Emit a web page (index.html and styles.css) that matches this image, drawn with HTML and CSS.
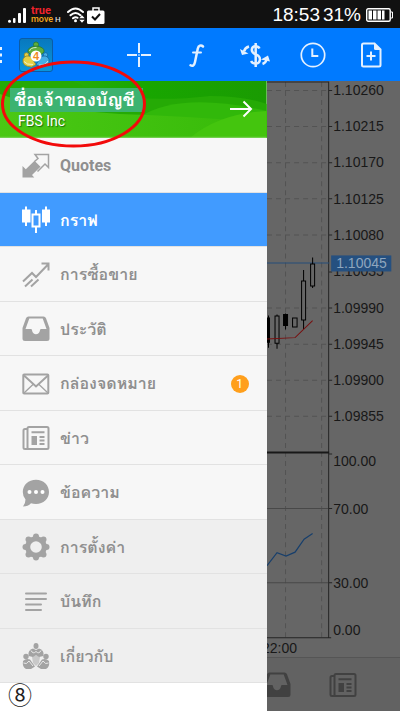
FILE: index.html
```html
<!DOCTYPE html>
<html lang="th">
<head>
<meta charset="utf-8">
<meta name="viewport" content="width=device-width, initial-scale=1">
<title>MetaTrader 4</title>
<link rel="stylesheet" href="styles.css">
</head>
<body>
<svg width="0" height="0" class="defs" aria-hidden="true">
  <defs>
    <symbol id="tray" viewBox="0 0 28 28"><path fill="currentColor" fill-rule="evenodd" d="M6.500 1.500h15q1.800 0 2.500 1.700L27.500 13v10.500q0 2.500-2.500 2.500H3Q.5 26 .5 23.500V13L4 3.200Q4.700 1.500 6.500 1.500zM7.300 3.500L3.500 14H9q.8 0 1 1.200c.7 5.400 7.300 5.400 8 0q.2-1.200 1-1.200h5.500L20.700 3.500z"/></symbol>
    <symbol id="news" viewBox="0 0 28 28"><g fill="none" stroke="currentColor" stroke-width="2"><rect x="5.500" y="3" width="21" height="22" rx="1.500"/><path d="M5.500 5h-2.500q-1.500 0-1.500 1.500v17q0 1.500 1.500 1.500h5M9.500 8.200h13M17.500 13h5M17.500 16.500h5M17.500 20h5"/></g><path fill="currentColor" d="M9.500 12h5.500v9H9.500z"/></symbol>
  </defs>
</svg>
<div class="app">
  <header class="status">
    <svg class="signal" viewBox="0 0 19 15" fill="#fff"><circle cx="1.500" cy="13.300" r="1.500"/><rect x="5" y="10" width="2.500" height="5" rx="1"/><rect x="10" y="5" width="3" height="10" rx="1"/><rect x="15" y="0" width="3" height="15" rx="1"/></svg>
    <div class="carrier"><b>true</b><span>move<i>H</i></span></div>
    <svg class="wifi" viewBox="0 0 18 16" fill="none" stroke="#fff" stroke-width="2" stroke-linecap="round"><path d="M1 5Q8.500-2 16 5M3.500 8.300q5-4.600 10 0M6 11.300q2.500-2 4.500-.5"/><circle cx="8.500" cy="13.800" r="1.500" fill="#fff" stroke="none"/><path d="M12.300 11.300l2.700-3 2.700 3zM12.300 12.700l2.700 3 2.700-3z" fill="#fff" stroke="none"/></svg>
    <svg class="bag" viewBox="0 0 18 17"><path d="M6 4V1h6v3" fill="none" stroke="#fff" stroke-width="1.500"/><rect x="0" y="3.500" width="17.500" height="13.500" rx="1.500" fill="#fff"/><path d="M5 9.500l3 3 5-5.500" fill="none" stroke="#111" stroke-width="2"/></svg>
    <div class="clock"><span>18:53</span><span>31%</span></div>
    <svg class="battery" viewBox="0 0 27 14"><rect x=".7" y=".7" width="23.500" height="12.600" rx="1.500" fill="none" stroke="#fff" stroke-width="1.400"/><path d="M25 4h1.500v6H25" fill="none" stroke="#fff"/><path d="M2.500 2.500h3.500v9H2.500zM7 2.500h3.500v9H7zM11.500 2.500H15v9h-3.500zM16 2.500h2.500v9H16z" fill="#fff"/></svg>
  </header>

  <nav class="toolbar">
    <button class="home" aria-label="Menu">
      <svg class="dots" viewBox="0 0 3 16" fill="#e8f3ff"><path d="M0 0h2v3H0zM0 6.500h2v3H0zM0 13h2v3H0z"/></svg>
      <svg class="logo" viewBox="0 0 34 34"><defs><linearGradient id="tile" x2="0" y2="1"><stop stop-color="#0878bd"/><stop offset="1" stop-color="#0a96dc"/></linearGradient></defs><rect x=".5" y=".5" width="33" height="33" rx="2.500" fill="url(#tile)" stroke="#0b5ca6"/>
        <g stroke-width=".8"><g fill="#5fae3c" stroke="#277830"><circle cx="17" cy="6.500" r="2.500"/><path d="M9 14q-1-5 8-6 9 1 8 6l-3.500 3-4.500-2-4.500 2z"/></g><g fill="#e5d044" stroke="#93862a"><circle cx="7.500" cy="17" r="2.300"/><path d="M4 21q2.500-4.500 7.500-2.500l5.500 8-4.500 2.500q-10-.5-8.500-8z"/></g><g fill="#45aee6" stroke="#17659e"><circle cx="26.500" cy="17" r="2.300"/><path d="M30 21q-2.500-4.500-7.500-2.500l-5.500 8 4.500 2.500q10-.5 8.500-8z"/></g><path d="M5 23.500q2.500 3.500 9 3M20 27q6 1 9-4M10.500 13q1-3.500 7-3.500" fill="none" stroke="#eaf7f4"/></g><circle cx="17" cy="18" r="5.500" fill="#fff"/><text x="17" y="22" text-anchor="middle" class="four">4</text></svg>
    </button>
    <button aria-label="Crosshair"><svg viewBox="0 0 26 26" fill="none" stroke="#e3f0ff" stroke-width="2"><path d="M13 1v10M13 15v10M1 13h10M15 13h10"/><path d="M12.300 13h1.400" stroke-width="1.400"/></svg></button>
    <button aria-label="Indicators"><svg viewBox="0 0 26 26" fill="none" stroke="#e3f0ff" stroke-width="2.500" stroke-linecap="round"><path d="M19 4.500c-2-2-4.500-1-5.200 2L11 20c-.7 3.500-2.500 4.500-4.500 3.300"/><path d="M9 10.500h8" stroke-width="2"/></svg></button>
    <button aria-label="Trade"><svg class="wide" viewBox="0 0 30 26" fill="none" stroke="#e3f0ff" stroke-width="2"><path d="M19.500 6.500q-1.200-2.200-4-2.200-3.500 0-3.700 3.500 0 3 3.900 4.600 4.500 1.800 4.200 5.200-.4 4-4.300 4-3.300 0-4.500-2.600" stroke-width="2.500"/><path d="M15.700 1v24" stroke-width="2.500"/><path d="M9 4.500Q5 5.500 4 9.500M22.500 22q4-1.500 4-5.500" stroke-width="2.500"/><path d="M0 7l2 6 6.500-1.500zM21 17.500l7-4 2 6z" fill="#e3f0ff" stroke="none"/></svg></button>
    <button aria-label="Periods"><svg viewBox="0 0 26 26" fill="none" stroke="#e3f0ff"><circle cx="13" cy="13" r="11.700" stroke-width="1.700"/><path d="M12.300 6.500V14h6" stroke-width="2"/></svg></button>
    <button aria-label="New order"><svg viewBox="0 0 26 26" fill="none" stroke="#e3f0ff" stroke-width="2"><path d="M5.500 1.500h11l6 6v15.500q0 1.500-1.500 1.500H5.500Q4 24.500 4 23V3q0-1.500 1.500-1.500zM13 9.500v9M8.500 14h9"/><path d="M16 1l7 7h-5.500Q16 8 16 6.500z" fill="#e3f0ff" stroke="none"/></svg></button>
  </nav>

  <main class="body">
    <aside class="drawer">
      <a class="account" href="#account">
        <svg class="waves" viewBox="0 0 267 57" preserveAspectRatio="none"><defs><linearGradient id="g1"><stop stop-color="#31b512"/><stop offset=".55" stop-color="#18a600"/><stop offset="1" stop-color="#1a9b02"/></linearGradient><linearGradient id="g2"><stop stop-color="#4bc814"/><stop offset="1" stop-color="#36ba09"/></linearGradient></defs><rect width="267" height="57" fill="url(#g1)"/><path d="M0 0h72Q120 25 210 15q35 0 57 8v34H0z" fill="#25aa05"/><path d="M140 36Q180 10 267 30v27H140z" fill="#31b80a"/><path d="M0 13q40 15 120 20 70 2 147 9v15H0z" fill="url(#g2)"/><path d="M190 57q30-25 77-27v27z" fill="#44c50e"/><path d="M0 56.300h267" stroke="#7ed35d"/></svg>
        <span class="who"><strong>ชื่อเจ้าของบัญชี</strong><span>FBS Inc</span></span>
        <svg class="arrow" viewBox="0 0 24 18" fill="none" stroke="#fff" stroke-width="2"><path d="M1 9h21M14.500 1.500L22 9l-7.500 7.500"/></svg>
      </a>
      <nav class="menu">
        <a href="#quotes"><svg viewBox="0 0 28 28"><path fill="currentColor" d="M.5 25.500V14l3.300 3.300 8.700-8.500 6 6-8.500 8.300 2.300 2.400z"/><path d="M12.500 9l3.500-3-3-4h13.500v13l-3.500-3.500-7.500 7.500" transform="translate(0 .5)" fill="none" stroke="currentColor" stroke-width="1.500"/></svg><span>Quotes</span></a>
        <a href="#chart" class="active" aria-current="page"><svg viewBox="0 0 28 28" fill="currentColor"><path d="M3 .5h2v3h3.500v13H5v3.500H3v-3.500H0v-13h3zM23 .5h2v3h3.500v13H25v3.500h-2v-3.500h-3v-13h3z"/><path fill-rule="evenodd" d="M13 4h2v3.500h3.500v14H15V27h-2v-5.500H9.500v-14H13zm-1.500 5.500v10h5v-10z"/></svg><span>กราฟ</span></a>
        <a href="#trade"><svg viewBox="0 0 28 28" fill="none" stroke="currentColor" stroke-width="2"><path d="M1 20.500l9-8.500 4 4L26 3.500M19.500 2.500h7v7M3 25.500l7.500-7M9 25.500l7.500-7" /></svg><span>การซื้อขาย</span></a>
        <a href="#history"><svg><use href="#tray"/></svg><span>ประวัติ</span></a>
        <a href="#mailbox"><svg viewBox="0 0 28 28" fill="none" stroke="currentColor"><rect x="1.300" y="4.500" width="25" height="19" rx=".8" stroke-width="2"/><path d="M2 5.500l12 11 12-11" stroke-width="2"/><path d="M2 23l9.500-9M26 23l-9.500-9" stroke-width="1.300"/></svg><span>กล่องจดหมาย</span><b class="badge">1</b></a>
        <a href="#news"><svg><use href="#news"/></svg><span>ข่าว</span></a>
        <a href="#messages"><svg viewBox="0 0 28 28"><path fill="currentColor" d="M14 .8c7.500 0 13 5.300 13 12.200S21.500 25 14 25q-3 0-5-.8-3 3.300-8 3.300 2.500-3 2.500-7Q.8 17.500.8 13C.8 6.100 6.500.8 14 .8z"/><g fill="#fff"><circle cx="7.500" cy="13" r="2"/><circle cx="14" cy="13" r="2"/><circle cx="20.500" cy="13" r="2"/></g></svg><span>ข้อความ</span></a>
        <a href="#settings" class="low"><svg viewBox="0 0 28 28"><circle cx="14" cy="14" r="8.300" fill="none" stroke="currentColor" stroke-width="5"/><g fill="currentColor"><circle cx="14" cy="3.500" r="3"/><circle cx="14" cy="24.500" r="3"/><circle cx="3.500" cy="14" r="3"/><circle cx="24.500" cy="14" r="3"/><circle cx="6.500" cy="6.500" r="3"/><circle cx="21.500" cy="6.500" r="3"/><circle cx="6.500" cy="21.500" r="3"/><circle cx="21.500" cy="21.500" r="3"/></g></svg><span>การตั้งค่า</span></a>
        <a href="#journal" class="low"><svg viewBox="0 0 28 28" fill="none" stroke="currentColor" stroke-width="2" stroke-linecap="round"><path d="M4 5.500h20M4 11h20M4 16.500h15M4 22h15"/></svg><span>บันทึก</span></a>
        <a href="#about" class="low"><svg viewBox="0 0 28 28"><g fill="currentColor"><ellipse cx="14" cy="4" rx="2.500" ry="3"/><path d="M6.500 14Q5.500 8 11 6.500l3 1.500 3-1.500q5.500 1.500 4.500 7.500L17 15l-3-2-3 2z"/><circle cx="4" cy="14.500" r="2.700"/><circle cx="24" cy="14.500" r="2.700"/><path d="M10 15l4-2 4 2-1 6-3 3-3-3z" opacity=".5"/><path d="M1 19q3-3 7-1.500l5 7-4 2.500H4q-4-2-3-8zM27 19q-3-3-7-1.500l-5 7 4 2.500h5q4-2 3-8z"/></g><path d="M9 8.500q2 4 5 1 3 3 5-1M1.500 21q3 2 5.500-2l4 5M26.500 21q-3 2-5.500-2l-4 5" fill="none" stroke="#efefef" stroke-width=".9"/></svg><span>เกี่ยวกับ</span></a>
      </nav>
      <footer class="step">⑧</footer>
    </aside>

    <section class="pane">
      <svg class="chart" viewBox="267 81 133 576" preserveAspectRatio="xMinYMin slice">
        <g fill="none" stroke="#535353" stroke-dasharray="5 4"><path d="M285.500 82v554M321.500 82v554M267 90.500h61M267 126.500h61M267 162.500h61M267 198.500h61M267 234.500h61M267 307.500h61M267 343.500h61M267 379.500h61M267 415.500h61"/></g>
        <path d="M267 507.500h61M267 581.500h61" stroke="#484848"/>
        <path d="M267 82h62M328.500 82v555M267 636.500h64M328 90.500h4M328 126.500h4M328 162.500h4M328 198.500h4M328 234.500h4M328 271.500h4M328 307.500h4M328 343.500h4M328 379.500h4M328 415.500h4M328 453h4M328 507.500h4M328 581.500h4" fill="none" stroke="#252525"/>
        <path d="M267 451.500h62" stroke="#181818" stroke-width="2"/>
        <path d="M267 262.500h62" stroke="#254d78"/>
        <g stroke="#000"><path d="M268.500 315v32M277 314v34M285.500 313v16M303.500 269.500v59M312.500 257v30.500" /><path d="M265.500 317.500h4v24h-4zM283.500 314h4v11h-4z" /><g fill="#666"><path d="M275 315.500h4v27h-4zM292.500 317.500h4.500v9h-4.500zM301.500 280.500h4v39h-4zM310.500 263.500h4v22h-4z"/></g></g>
        <path d="M267 338.300l28-1.300 17.500-17" fill="none" stroke="#780e0e"/>
        <path d="M267 564.500l10-13 9 3.500 9-4 9-13 8.500-5.500" fill="none" stroke="#173f6c" stroke-width="1.200"/>
        <g class="scale"><text x="333" y="95">1.10260</text><text x="333" y="131">1.10215</text><text x="333" y="167">1.10170</text><text x="333" y="204">1.10125</text><text x="333" y="240">1.10080</text><text x="333" y="276">1.10035</text><text x="333" y="312">1.09990</text><text x="333" y="348">1.09945</text><text x="333" y="384">1.09900</text><text x="333" y="420">1.09855</text><text x="333" y="465">100.00</text><text x="333" y="513">70.00</text><text x="333" y="587">30.00</text><text x="333" y="634">0.00</text><text x="262" y="652">22:00</text></g>
        <rect x="331" y="255" width="60" height="16" fill="#255080"/><text x="336" y="268" class="price">1.10045</text>
      </svg>
      <nav class="tabs"><a href="#history" aria-label="History"><svg><use href="#tray"/></svg></a><a href="#news" aria-label="News"><svg><use href="#news"/></svg></a></nav>
    </section>
  </main>
  <svg class="mark" viewBox="0 0 148 90" aria-hidden="true"><ellipse cx="73.500" cy="45" rx="71" ry="42" fill="none" stroke="#f20a0a" stroke-width="3"/></svg>
</div>
</body>
</html>
```

FILE: styles.css
```css
* { box-sizing: border-box; }

body {
  margin: 0;
  background: #fff;
  font-family: Roboto, Loma, Waree, "Noto Sans Thai Looped", "Noto Sans", sans-serif;
}

.defs { position: absolute; }

a { color: inherit; text-decoration: none; }

svg { flex: none; display: block; }

.app {
  position: relative;
  display: flex;
  flex-direction: column;
  min-height: 100vh;
  overflow: hidden;
}

.status {
  display: flex;
  align-items: center;
  height: 28px;
  padding: 2px 7px 0 8px;
  background: #111;
  color: #fff;
}

.signal { width: 19px; height: 15px; }

.carrier {
  display: flex;
  flex-direction: column;
  width: 36px;
  margin-left: 4px;
  line-height: 9px;
  color: #f5a81c;
}

.carrier b { color: #f0232c; font-size: 11px; }
.carrier span { font-size: 9px; font-weight: 500; white-space: nowrap; }
.carrier i { margin-left: 2px; font-size: 8px; font-style: normal; color: #ddd; }
.wifi { width: 18px; height: 16px; }
.bag { width: 18px; height: 17px; margin-left: 2px; }

.clock {
  display: flex;
  gap: 3px;
  margin-left: auto;
  font: 19px/24px "Liberation Sans", sans-serif;
}

.battery { width: 27px; height: 14px; margin-left: 5px; }

.toolbar {
  display: grid;
  grid-template-columns: 1fr repeat(5, 58px);
  height: 53px;
  background: #007aff;
}

.toolbar button {
  display: flex;
  align-items: center;
  justify-content: center;
  padding: 0;
  border: 0;
  background: none;
}

.toolbar button svg { width: 26px; height: 26px; }
.toolbar button .wide { width: 30px; }
.toolbar .home { justify-content: flex-start; gap: 16px; }
.toolbar .home .dots { width: 3px; height: 16px; }
.toolbar .home .logo { width: 34px; height: 34px; }
.four { font: bold 11px "Liberation Sans", sans-serif; fill: #f08a24; }

.body {
  flex: 1;
  display: grid;
  grid-template-columns: 2fr 1fr;
}

.drawer { display: flex; flex-direction: column; background: #fff; }

.account {
  position: relative;
  display: flex;
  align-items: center;
  justify-content: space-between;
  height: 57px;
  padding: 0 14px 2px 10px;
  color: #fff;
}

.waves { position: absolute; inset: 0; width: 100%; height: 100%; }

.who { position: relative; display: flex; flex-direction: column; }

.who strong {
  padding: 0 8px 0 4px;
  background: #3cb371;
  font: bold 18px/24px "Norasi", "Kinnari", "Loma", serif;
  white-space: nowrap;
}

.who span {
  padding-left: 8px;
  font-size: 14px;
  line-height: 18px;
  text-shadow: 1px 1px 1px #1c6b0a;
}

.arrow { position: relative; width: 24px; height: 18px; }

.menu {
  display: grid;
  grid-auto-rows: 1fr;
  min-height: 545px;
}

.menu a {
  display: flex;
  align-items: center;
  gap: 10px;
  padding: 2px 18px 0 22px;
  border-bottom: 1px solid #e2e2e2;
  background: #f7f7f7;
  color: #a3a3a3;
}

.menu svg { width: 28px; height: 28px; }
.menu span { font-size: 16px; font-weight: 700; color: #8f8f8f; }
.menu .low { background: #efefef; }
.menu .active { background: #419bff; color: #fff; }
.menu .active span { color: #fff; }

.badge {
  width: 18px;
  margin-left: auto;
  border-radius: 50%;
  background: #ff9f1c;
  color: #fff;
  font-size: 12px;
  font-weight: 400;
  line-height: 18px;
  text-align: center;
}

.step {
  padding-left: 8px;
  font: 24px/22px "Noto Sans CJK JP", sans-serif;
  color: #222;
}

.pane {
  display: flex;
  flex-direction: column;
  min-width: 0;
  overflow: hidden;
  background: #666;
}

.chart { width: 100%; height: 576px; }
.scale { font: 14px "Liberation Sans", sans-serif; fill: #181818; }
.price { font: 14px "Liberation Sans", sans-serif; fill: #8fa6bd; }

.tabs {
  flex: 1;
  display: grid;
  grid-template-columns: 20px 1fr;
  align-items: center;
  border-top: 1px solid #555;
  background: #626262;
  color: #414141;
}

.tabs a { display: flex; justify-content: center; }
.tabs svg { width: 28px; height: 28px; }

.mark {
  position: absolute;
  left: 0;
  top: 59px;
  width: 148px;
  height: 90px;
}
```
